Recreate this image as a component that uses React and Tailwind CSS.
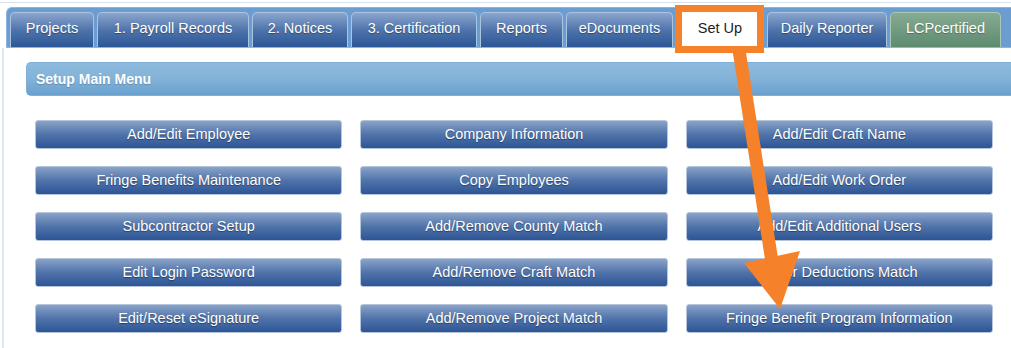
const tabs = [
  { label: "Projects", w: "w-[84px]" },
  { label: "1. Payroll Records", w: "w-[152px]" },
  { label: "2. Notices", w: "w-[96px]" },
  { label: "3. Certification", w: "w-[126px]" },
  { label: "Reports", w: "w-[83px]" },
  { label: "eDocuments", w: "w-[107px]" },
  { label: "Set Up", w: "w-[88px]", active: true },
  { label: "Daily Reporter", w: "w-[120px]" },
  { label: "LCPcertified", w: "w-[111px]", green: true },
];

const buttons = [
  "Add/Edit Employee",
  "Company Information",
  "Add/Edit Craft Name",
  "Fringe Benefits Maintenance",
  "Copy Employees",
  "Add/Edit Work Order",
  "Subcontractor Setup",
  "Add/Remove County Match",
  "Add/Edit Additional Users",
  "Edit Login Password",
  "Add/Remove Craft Match",
  "Other Deductions Match",
  "Edit/Reset eSignature",
  "Add/Remove Project Match",
  "Fringe Benefit Program Information",
];

function Tab({ tab }) {
  let look = "bg-gradient-to-b from-[#8ba6cd] via-[#4f74ab] to-[#2c5696] text-white border-[#a9c3e2] [text-shadow:0_1px_1px_rgba(0,0,0,0.35)]";
  if (tab.active) look = "bg-white text-[#1c1c1c] border-white";
  if (tab.green) look = "bg-gradient-to-b from-[#86ab92] to-[#5e8b70] text-white border-[#a9c9b4] [text-shadow:0_1px_1px_rgba(0,0,0,0.3)]";
  return (
    <div className={`${tab.w} ${look} h-[35px] shrink-0 rounded-t-[5px] border border-b-0 flex items-center justify-center pb-[3px] text-[14.5px]`}>
      {tab.label}
    </div>
  );
}

function MenuButton({ label }) {
  return (
    <div className="h-[29px] rounded-[3px] border border-[#b4c5dc] bg-gradient-to-b from-[#8aa3c8] via-[#5073aa] to-[#2d5595] text-white text-[14.5px] flex items-center justify-center [text-shadow:0_1px_1px_rgba(0,0,0,0.4)]">
      {label}
    </div>
  );
}

export default function App() {
  return (
    <div className="relative w-[1011px] h-[348px] overflow-hidden bg-white font-['Liberation_Sans',Arial,sans-serif]">
      {/* top rule */}
      <div className="pt-[2px]">
        <div className="h-[1px] bg-[#d6e2ee]" />
      </div>

      {/* tab strip */}
      <div className="ml-[6px] mt-[4px] h-[41px] rounded-tl-[6px] border border-r-0 border-[#8fb5dc] bg-[#6c9dd1] flex items-end gap-[3px] pl-[3px]">
        {tabs.map((t) => (
          <Tab key={t.label} tab={t} />
        ))}
      </div>

      {/* panel */}
      <div className="ml-[2px] border-l-2 border-[#dde8f3] h-[300px] pt-[14px]">
        <div className="ml-[22px] h-[34px] rounded-l-[5px] border border-r-0 border-[#7fb0d8] bg-gradient-to-b from-[#8dbadd] via-[#82b2d8] to-[#68a1cd] flex items-center pl-[9px] text-white font-bold text-[14px] [text-shadow:0_1px_1px_rgba(0,0,0,0.2)]">
          Setup Main Menu
        </div>

        <div className="ml-[31px] mt-[24px] w-[958px] grid grid-cols-3 gap-x-[18px] gap-y-[17px]">
          {buttons.map((b) => (
            <MenuButton key={b} label={b} />
          ))}
        </div>
      </div>

      {/* annotation overlay */}
      <svg className="absolute inset-0 pointer-events-none" width="1011" height="348" viewBox="0 0 1011 348">
        <rect x="678.5" y="8.5" width="82" height="41" fill="none" stroke="#f5822a" strokeWidth="7" />
        <line x1="739" y1="50" x2="772" y2="262" stroke="#f5822a" strokeWidth="13" />
        <polygon points="744,263 800,251 780,309" fill="#f5822a" />
      </svg>
    </div>
  );
}
